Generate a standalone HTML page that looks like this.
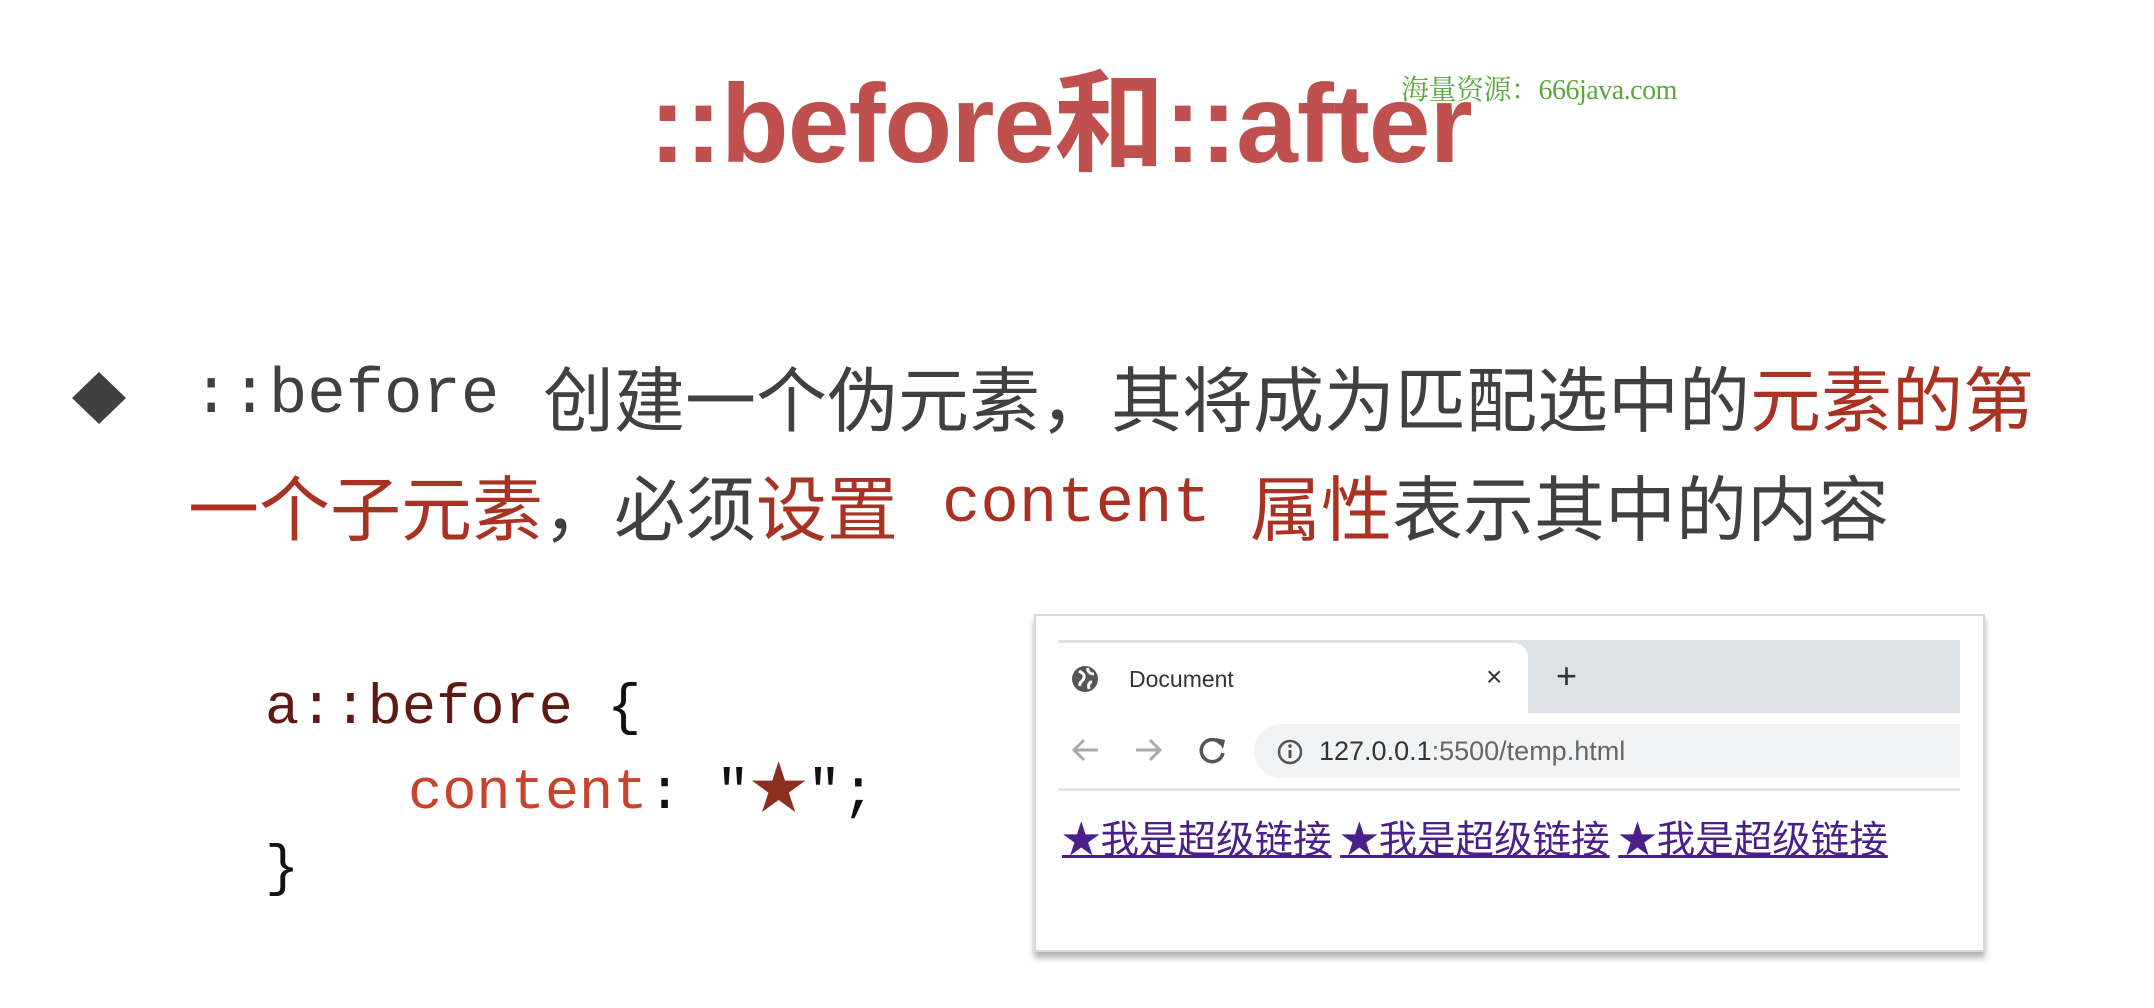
<!DOCTYPE html>
<html><head><meta charset="utf-8"><style>
*{margin:0;padding:0;box-sizing:border-box}
body{width:2154px;height:1008px;background:#fff;position:relative;overflow:hidden;font-family:"Liberation Sans","Noto Sans CJK SC",sans-serif}
.a{position:absolute;white-space:pre}
.mono{font-family:"Liberation Mono","Noto Sans CJK SC",monospace}
.cjk{font-family:"Noto Sans CJK SC",sans-serif}
.g{color:#404040}.r{color:#a93222}
</style></head><body>
<div class="a" style="left:649px;top:58px;font-size:111px;line-height:111px;font-weight:bold;color:#c0504d;letter-spacing:-1px">::before<span class="cjk" style="font-weight:bold">和</span>::after</div>
<div class="a" style="left:1401px;top:74px;font-size:28px;line-height:34px;color:#5aa83a;font-family:'Liberation Serif','Noto Serif CJK SC',serif;letter-spacing:-0.5px">海量资源：666java.com</div>

<div class="a" style="left:72px;top:372px;width:52px;height:52px"><svg width="54" height="52" viewBox="0 0 54 52"><polygon points="27,0 54,26 27,52 0,26" fill="#404040"/></svg></div>
<div class="a mono g" style="left:192px;top:361px;font-size:64px;line-height:71px">::before</div>
<div class="a cjk" style="left:543px;top:361px;font-size:71px;line-height:71px"><span class="g">创建一个伪元素，其将成为匹配选中的</span><span class="r">元素的第</span></div>
<div class="a cjk" style="left:188px;top:470px;font-size:71px;line-height:71px"><span class="r">一个子元素</span><span class="g">，必须</span><span class="r">设置</span></div>
<div class="a mono r" style="left:942px;top:470px;font-size:64px;line-height:71px">content</div>
<div class="a cjk" style="left:1250px;top:470px;font-size:71px;line-height:71px"><span class="r">属性</span><span class="g">表示其中的内容</span></div>

<div class="a mono" style="left:265px;top:681px;font-size:57px;line-height:57px;color:#5e1a12">a::before <span style="color:#111">{</span></div>
<div class="a mono" style="left:408px;top:756px;font-size:57px;line-height:57px;color:#c8432d">content<span style="color:#111">: "</span><span class="cjk" style="color:#8b3020">★</span><span style="color:#111">";</span></div>
<div class="a mono" style="left:265px;top:842px;font-size:57px;line-height:57px;color:#111">}</div>

<div class="a" style="left:1034px;top:614px;width:951px;height:338px;background:#fff;border:2px solid #d8d8d8;box-shadow:0 6px 6px rgba(0,0,0,.3)"></div>
<div class="a" style="left:1058px;top:640px;width:902px;height:73px;background:#dee1e6"></div>
<div class="a" style="left:1058px;top:643px;width:470px;height:70px;background:#fff;border-radius:0 14px 0 0"></div>
<div class="a" style="left:1070px;top:664px"><svg width="30" height="30" viewBox="0 0 30 30"><circle cx="15" cy="15" r="13" fill="#555"/><path d="M9 7c3 2 6 3 5 7s-5 3-4 8M18 4c-1 3 2 6 6 6M22 18c-3 0-4 3-3 7" stroke="#fff" stroke-width="3" fill="none"/></svg></div>
<div class="a" style="left:1129px;top:664px;font-size:23px;line-height:30px;color:#333">Document</div>
<div class="a" style="left:1486px;top:662px;font-size:28px;line-height:30px;color:#333">×</div>
<div class="a" style="left:1556px;top:658px;font-size:36px;line-height:36px;color:#333">+</div>

<div class="a" style="left:1070px;top:734px"><svg width="160" height="32" viewBox="0 0 160 32"><path d="M28 16H4M14 6L4 16l10 10" stroke="#aaa" stroke-width="3" fill="none"/><path d="M66 16h24M80 6l10 10-10 10" stroke="#aaa" stroke-width="3" fill="none"/><path d="M151 10a11 11 0 1 0 2 9" stroke="#555" stroke-width="3.5" fill="none"/><path d="M146 4l9 2-2 9z" fill="#555"/></svg></div>
<div class="a" style="left:1254px;top:724px;width:706px;height:54px;background:#f1f3f4;border-radius:27px 0 0 27px"></div>
<div class="a" style="left:1276px;top:738px"><svg width="28" height="28" viewBox="0 0 28 28"><circle cx="14" cy="14" r="11" stroke="#555" stroke-width="2.5" fill="none"/><path d="M14 12v8" stroke="#555" stroke-width="3"/><circle cx="14" cy="8" r="1.8" fill="#555"/></svg></div>
<div class="a" style="left:1319px;top:734px;font-size:27px;line-height:34px;color:#333">127.0.0.1<span style="color:#666">:5500/temp.html</span></div>
<div class="a" style="left:1058px;top:788px;width:902px;height:3px;background:#e4e4e4"></div>
<div class="a cjk" style="left:1062px;top:815px;font-size:38.5px;line-height:44px;color:#4b1f8a"><span style="text-decoration:underline">★我是超级链接</span> <span style="text-decoration:underline">★我是超级链接</span> <span style="text-decoration:underline">★我是超级链接</span></div>
</body></html>
